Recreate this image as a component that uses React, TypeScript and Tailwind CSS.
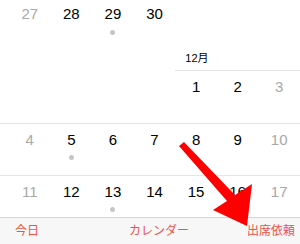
const font = {
  fontFamily: '"Liberation Sans", "Noto Sans CJK JP", sans-serif',
};

type Day = { n?: number; muted?: boolean; dot?: boolean };

const weeks: { days: Day[]; top: string }[] = [
  {
    top: "pt-[5px]",
    days: [{ n: 27, muted: true }, { n: 28 }, { n: 29, dot: true }, { n: 30 }, {}, {}, {}],
  },
];

function DayCell({ day, dotGap }: { day: Day; dotGap: string }) {
  return (
    <div className="flex flex-col items-center">
      {day.n !== undefined && (
        <span
          className={`text-[15px] leading-[18px] ${day.muted ? "text-[#a8a8a8]" : "text-black"}`}
        >
          {day.n}
        </span>
      )}
      {day.dot && <span className={`${dotGap} w-[5px] h-[5px] rounded-full bg-[#c6c6c6]`} />}
    </div>
  );
}

function Week({ days, className, top, dotGap }: { days: Day[]; className: string; top: string; dotGap: string }) {
  return (
    <div className={`grid grid-cols-7 pl-[9px] ${top} ${className}`}>
      {days.map((d, i) => (
        <DayCell key={i} day={d} dotGap={dotGap} />
      ))}
    </div>
  );
}

export default function App() {
  return (
    <div className="relative w-[300px] h-[244px] bg-white overflow-hidden flex flex-col" style={font}>
      {/* end of November */}
      <Week days={weeks[0].days} top="pt-[5px]" dotGap="mt-[7px]" className="h-[49px] shrink-0" />

      {/* December header */}
      <div className="grid grid-cols-7 pl-[9px] h-[22px] shrink-0">
        <div className="col-start-5 col-span-3 border-b border-[#e4e4e4] flex items-end pb-[5px] pl-[10px]">
          <span className="text-[11px] leading-[14px] text-black">12月</span>
        </div>
      </div>

      <Week
        days={[{}, {}, {}, {}, { n: 1 }, { n: 2 }, { n: 3, muted: true }]}
        top="pt-[7px]"
        dotGap="mt-[6px]"
        className="h-[53px] shrink-0 border-b border-[#e4e4e4]"
      />
      <Week
        days={[
          { n: 4, muted: true },
          { n: 5, dot: true },
          { n: 6 },
          { n: 7 },
          { n: 8 },
          { n: 9 },
          { n: 10, muted: true },
        ]}
        top="pt-[7px]"
        dotGap="mt-[6px]"
        className="h-[52px] shrink-0 border-b border-[#e4e4e4]"
      />
      <Week
        days={[
          { n: 11, muted: true },
          { n: 12 },
          { n: 13, dot: true },
          { n: 14 },
          { n: 15 },
          { n: 16 },
          { n: 17, muted: true },
        ]}
        top="pt-[7px]"
        dotGap="mt-[6px]"
        className="flex-1"
      />

      {/* toolbar */}
      <div className="h-[27px] shrink-0 border-t border-[#d6d6d6] bg-[#f7f7f7] flex items-center text-[12px] text-[#ee5249]">
        <span className="ml-[15px]">今日</span>
        <span className="ml-[90px]">カレンダー</span>
        <span className="ml-auto mr-[5px]">出席依頼</span>
      </div>

      {/* annotation arrow */}
      <svg className="absolute left-0 top-0 pointer-events-none" width="300" height="244" viewBox="0 0 300 244">
        <polygon
          points="179,146 227,201 213,210 247,226 252,184 235,195 184,142"
          fill="#ff0000"
          strokeLinejoin="round"
        />
      </svg>
    </div>
  );
}
